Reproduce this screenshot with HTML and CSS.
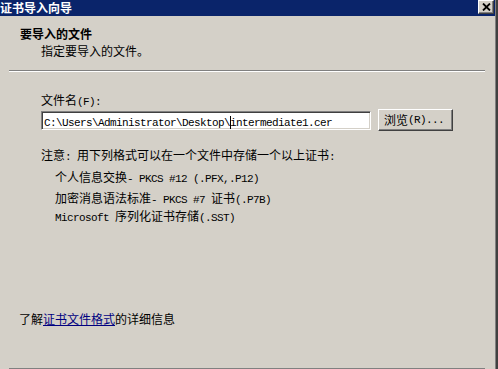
FILE: index.html
```html
<!DOCTYPE html>
<html lang="zh-CN">
<head>
<meta charset="utf-8">
<title>证书导入向导</title>
<link rel="stylesheet" href="styles.css">
</head>
<body>
<div class="window">
  <div class="frame">
    <div class="titlebar">
      <div class="caption">证书导入向导</div>
      <span class="xbtn"><svg class="xicon" width="9" height="8" viewBox="0 0 9 8"><path d="M1 0.5 L8 7.5 M8 0.5 L1 7.5" stroke="#000000" stroke-width="1.8" fill="none"/></svg></span>
    </div>
    <div class="header">
      <div class="h-title">要导入的文件</div>
      <div class="h-sub">指定要导入的文件。</div>
    </div>
    <div class="sep"></div>
    <div class="content">
      <div class="label">文件名<span class="m">(F):</span></div>
      <div class="row">
        <div class="field"><span class="m path">C:\Users\Administrator\Desktop\<span class="caret"></span>intermediate1.cer</span></div>
        <div class="btn">浏览<span class="m">(R)...</span></div>
      </div>
      <div class="note n1">注意<span class="m">: </span>用下列格式可以在一个文件中存储一个以上证书<span class="m">:</span></div>
      <div class="note n2 indent">个人信息交换<span class="m">- PKCS #12 (.PFX,.P12)</span></div>
      <div class="note n3 indent">加密消息语法标准<span class="m">- PKCS #7 </span>证书<span class="m">(.P7B)</span></div>
      <div class="note n4 indent"><span class="m">Microsoft </span>序列化证书存储<span class="m">(.SST)</span></div>
    </div>
    <div class="spacer"></div>
    <div class="more">了解<a class="link" href="#">证书文件格式</a>的详细信息</div>
    <div class="sep bottom"></div>
  </div>
</div>
</body>
</html>
```

FILE: styles.css
```css
* { box-sizing: border-box; }
html, body {
  margin: 0;
  padding: 0;
  width: 498px;
  height: 369px;
  overflow: hidden;
  background: #d4d0c8;
}
body {
  font-family: "Noto Sans CJK SC", "Liberation Sans", sans-serif;
  font-size: 12px;
  line-height: 12px;
  color: #000;
}
.window {
  width: 498px;
  height: 369px;
  border-right: 2px solid #404040;
}
.frame {
  height: 100%;
  border-right: 1px solid #808080;
  display: flex;
  flex-direction: column;
}
.titlebar {
  flex: none;
  height: 16px;
  background: #0a246a;
  display: flex;
  align-items: flex-start;
  padding-right: 1px;
}
.caption {
  flex: 1;
  color: #fff;
  font-weight: bold;
  line-height: 15px;
  white-space: nowrap;
}
.xbtn {
  flex: none;
  display: inline-flex;
  align-items: center;
  justify-content: center;
  width: 16px;
  height: 14px;
  background: #d4d0c8;
  border-top: 1px solid #ffffff;
  border-left: 1px solid #ffffff;
  border-right: 1px solid #404040;
  border-bottom: 1px solid #404040;
  box-shadow: inset -1px -1px 0 #808080;
}
.xicon { display: block; }
.header {
  padding-left: 20px;
  padding-top: 12px;
}
.h-title { font-weight: bold; }
.h-sub { margin-top: 5px; padding-left: 21px; }
.sep {
  flex: none;
  height: 2px;
  margin: 13px 10px 0 9px;
  border-top: 1px solid #808080;
  border-bottom: 1px solid #ffffff;
}
.content {
  padding-left: 41px;
  padding-top: 22px;
}
.m {
  font-family: "Liberation Mono", monospace;
  font-size: 11px;
  line-height: 6px;
  letter-spacing: -0.6px;
}
.label, .note { height: 12px; }
.row {
  display: flex;
  align-items: flex-start;
  margin-top: 5px;
  gap: 7px;
}
.field {
  flex: none;
  width: 330px;
  height: 19px;
  background: #fff;
  border-top: 1px solid #808080;
  border-left: 1px solid #808080;
  border-right: 1px solid #ffffff;
  border-bottom: 1px solid #ffffff;
  box-shadow: inset 1px 1px 0 #404040, inset -1px -1px 0 #d4d0c8;
  padding: 3px 0 0 2px;
  white-space: nowrap;
  overflow: hidden;
  line-height: 12px;
}
.caret {
  display: inline-block;
  width: 1px;
  height: 13px;
  margin-right: -1px;
  background: #000;
  vertical-align: -3px;
}
.btn {
  flex: none;
  width: 75px;
  height: 22px;
  margin-top: -2px;
  background: #d4d0c8;
  border-top: 1px solid #ffffff;
  border-left: 1px solid #ffffff;
  border-right: 1px solid #404040;
  border-bottom: 1px solid #404040;
  box-shadow: inset -1px -1px 0 #808080;
  display: flex;
  align-items: center;
  justify-content: center;
  padding-right: 3px;
  white-space: nowrap;
}
.note { white-space: nowrap; }
.n1 { margin-top: 18px; }
.n2 { margin-top: 10px; }
.n3 { margin-top: 9px; }
.n4 { margin-top: 6px; }
.indent { padding-left: 14px; }
.spacer { flex: 1; }
.more {
  padding-left: 19px;
  margin-bottom: 43px;
}
.link {
  color: #000080;
  text-decoration: underline;
}
.sep.bottom {
  margin: 0 10px 0 9px;
  height: 1px;
  border-bottom: none;
}
```
